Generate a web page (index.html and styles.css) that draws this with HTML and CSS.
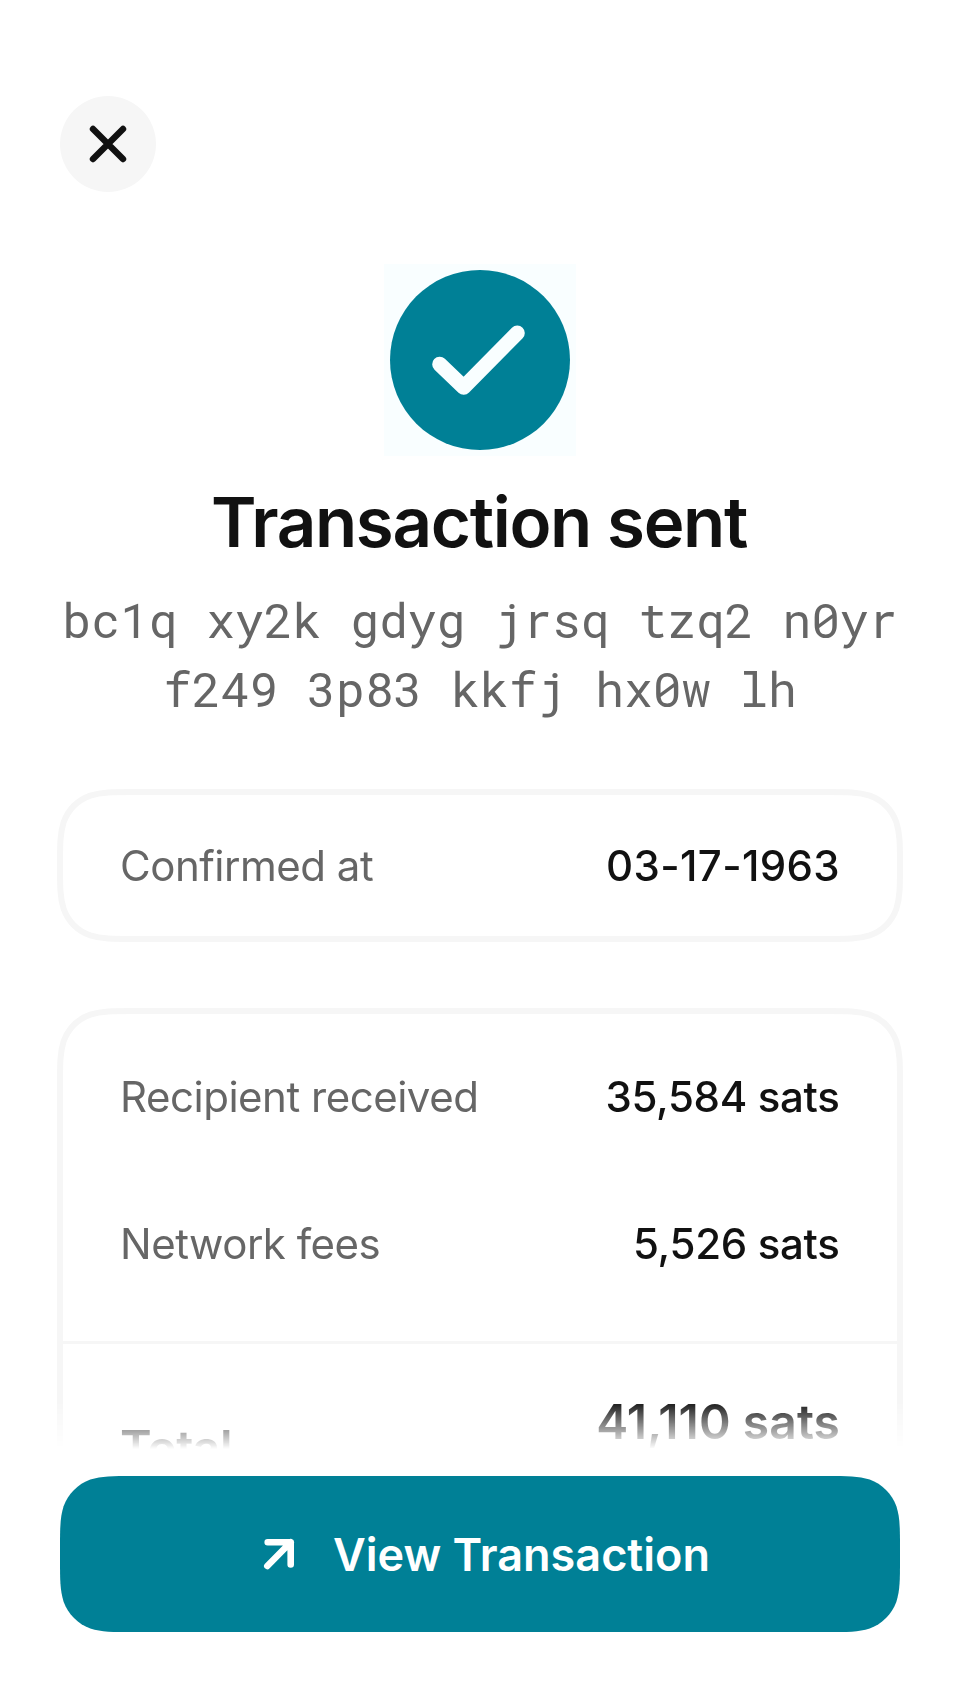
FILE: index.html
```html
<!DOCTYPE html>
<html lang="en">
<head>
<meta charset="utf-8">
<title>Transaction sent</title>
<link rel="stylesheet" href="styles.css">
</head>
<body>
<div class="screen">
  <main class="content">
    <button class="close" aria-label="Close">
      <svg width="96" height="96" viewBox="0 0 96 96"><path d="M33 33 63 63M63 33 33 63"/></svg>
    </button>
    <svg class="status" width="192" height="192" viewBox="0 0 192 192">
      <circle cx="96" cy="96" r="90"/>
      <path d="M55.7 100.3 79.7 123.2 133.3 69"/>
    </svg>
    <h1 class="title">Transaction sent</h1>
    <p class="address">bc1q xy2k gdyg jrsq tzq2 n0yr f249 3p83 kkfj hx0w lh</p>
    <section class="card card-date">
      <svg class="outline" width="846" height="153" viewBox="-3 -3 846 153"><path d="M73.4 0H766.6c21.15 0 31.72 0 43.09 3.6c12.41 4.51 22.2 14.3 26.71 26.71c3.6 11.37 3.6 21.94 3.6 43.09V73.6c0 21.15 0 31.72-3.6 43.09c-4.51 12.41-14.3 22.2-26.71 26.71c-11.37 3.6-21.94 3.6-43.09 3.6H73.4c-21.15 0-31.72 0-43.09-3.6c-12.41-4.51-22.2-14.3-26.71-26.71c-3.6-11.37-3.6-21.94-3.6-43.09V73.4c0-21.15 0-31.72 3.6-43.09c4.51-12.41 14.3-22.2 26.71-26.71c11.37-3.6 21.94-3.6 43.09-3.6z"/></svg>
      <div class="row"><span class="label">Confirmed at</span><span class="value date">03-17-1963</span></div>
    </section>
    <section class="card card-amounts">
      <svg class="outline" width="846" height="540" viewBox="-3 -3 846 540"><path d="M0 540V73.4c0-21.15 0-31.72 3.6-43.09c4.51-12.41 14.3-22.2 26.71-26.71c11.37-3.6 21.94-3.6 43.09-3.6H766.6c21.15 0 31.72 0 43.09 3.6c12.41 4.51 22.2 14.3 26.71 26.71c3.6 11.37 3.6 21.94 3.6 43.09V540"/></svg>
      <div class="row"><span class="label">Recipient received</span><span class="value">35,584 sats</span></div>
      <div class="row"><span class="label">Network fees</span><span class="value">5,526 sats</span></div>
      <div class="row total"><span class="total-label">Total</span><span class="total-value">41,110 sats</span></div>
    </section>
  </main>
  <footer class="footer">
    <button class="action">
      <svg class="arrow" width="36" height="36" viewBox="0 0 36 36"><path d="M6.7 6.3H29.7V28.5M29.7 6.3 6.3 30"/></svg>
      <span>View Transaction</span>
    </button>
  </footer>
</div>
</body>
</html>
```
FILE: styles.css
```css
* { box-sizing: border-box; margin: 0; padding: 0; }
body { background: #fff; font-family: Inter, sans-serif; color: #111; }
.screen { width: 960px; height: 1704px; overflow: hidden; display: flex; flex-direction: column; }
.content {
  height: 1449px;
  overflow: hidden;
  padding: 96px 57px 0;
  display: flex;
  flex-direction: column;
  align-items: center;
  -webkit-mask-image: linear-gradient(#000 1401px, transparent 1449px);
  mask-image: linear-gradient(#000 1401px, transparent 1449px);
}
.close {
  flex: none;
  align-self: flex-start;
  margin-left: 3px;
  width: 96px;
  height: 96px;
  border: 0;
  border-radius: 50%;
  background: #f6f6f6;
}
.close svg { display: block; }
.close path { fill: none; stroke: #111; stroke-width: 6.4; stroke-linecap: round; }
.status { flex: none; margin-top: 72px; background: #f9feff; }
.status circle { fill: #008096; }
.status path { fill: none; stroke: #f9feff; stroke-width: 15; stroke-linecap: round; stroke-linejoin: round; }
.title { flex: none; margin-top: 24px; padding-right: 2px; font-size: 69px; line-height: 84px; font-weight: 600; white-space: nowrap; letter-spacing: -1.32px; }
.address {
  flex: none;
  width: 840px;
  margin-top: 21px;
  font: 400 48px/69px "Roboto Mono", "DejaVu Sans Mono", monospace;
  color: #666;
  text-align: center;
}
.card { position: relative; flex: none; width: 846px; }
.card-date { margin-top: 66px; height: 153px; padding-top: 3px; }
.card-amounts { margin-top: 66px; height: 540px; padding-top: 15px; }
.outline { position: absolute; left: 0; top: 0; }
.outline path { fill: none; stroke: #f6f6f6; stroke-width: 6; }
.row { height: 147px; padding: 0 63px; display: flex; align-items: center; justify-content: space-between; font-size: 42px; line-height: 51px; }
.label { color: #666; letter-spacing: -0.48px; }
.value { padding-right: 0.5px; font-weight: 500; letter-spacing: -0.32px; }
.date { padding-right: 0; letter-spacing: 0.35px; }
.total {
  height: 213px;
  margin: 24px 6px 0;
  padding: 0 57px 5px;
  border-top: 3px solid #f6f6f6;
  font-size: 48px;
  font-weight: 600;
}
.total-label { padding-top: 2px; letter-spacing: -0.5px; }
.total-value { padding-bottom: 51px; letter-spacing: 0.08px; }
.footer { padding: 27px 60px 0; }
.action {
  width: 840px;
  height: 156px;
  padding: 2px 0 0 11px;
  border: 0;
  display: flex;
  align-items: center;
  justify-content: center;
  gap: 36px;
  background: #008096;
  color: #fff;
  font: 600 45px/54px Inter, sans-serif;
  clip-path: path("M73.4 0H766.6c21.15 0 31.72 0 43.09 3.6c12.41 4.51 22.2 14.3 26.71 26.71c3.6 11.37 3.6 21.94 3.6 43.09V82.6c0 21.15 0 31.72-3.6 43.09c-4.51 12.41-14.3 22.2-26.71 26.71c-11.37 3.6-21.94 3.6-43.09 3.6H73.4c-21.15 0-31.72 0-43.09-3.6c-12.41-4.51-22.2-14.3-26.71-26.71c-3.6-11.37-3.6-21.94-3.6-43.09V73.4c0-21.15 0-31.72 3.6-43.09c4.51-12.41 14.3-22.2 26.71-26.71c11.37-3.6 21.94-3.6 43.09-3.6z");
}
.arrow { margin-bottom: 3px; }
.arrow path { fill: none; stroke: #fff; stroke-width: 6.6; stroke-linecap: round; stroke-linejoin: round; }
```
